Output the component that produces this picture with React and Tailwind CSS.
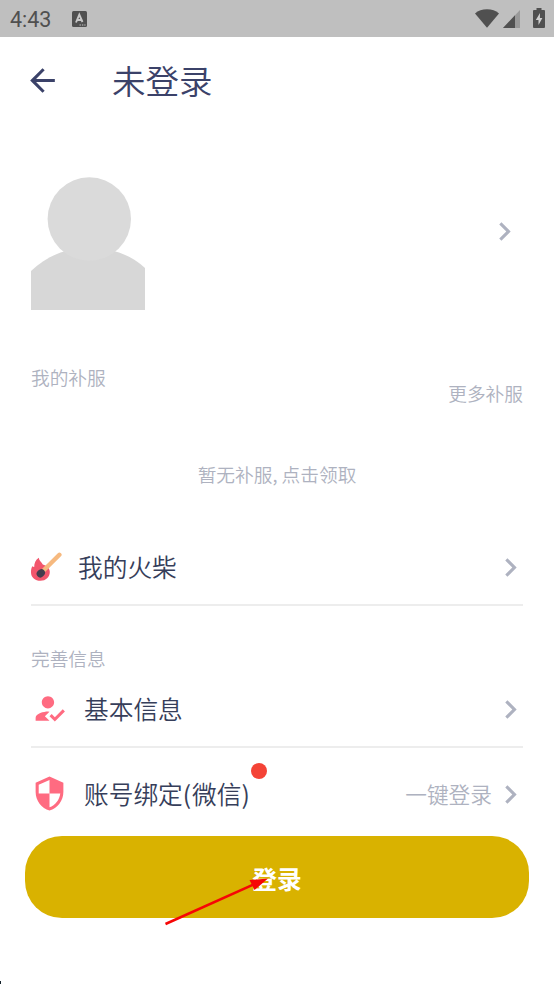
import React from 'react';
import { MdArrowBack, MdChevronRight, MdHowToReg, MdSecurity } from 'react-icons/md';

const StatusBar = () => (
  <div className="h-[37px] bg-[#bfbfbf] flex items-center pl-[10px] pr-[9px] text-[#505050]">
    <span className="font-['Roboto',sans-serif] font-normal text-[21.5px] leading-none w-[62px] mt-[2px]">4:43</span>
    <svg width="15" height="16" viewBox="0 0 15 16">
      <rect width="15" height="16" rx="1.5" fill="currentColor" />
      <path d="M4 11.500 7.300 3.600l3.200 7.400M5.200 9h4.400" fill="none" stroke="#c8c8c8" strokeWidth="1.900" />
      <path d="M7.500 14h6" stroke="#c8c8c8" strokeWidth="1.2" strokeDasharray="1.4 1" />
    </svg>
    <svg className="ml-auto" width="24" height="19" viewBox="0 0 24 19">
      <path d="M0 4.4C3.2 1.800 7.300.3 12 .3s8.800 1.500 12 4.100L12 18.800z" fill="currentColor" />
    </svg>
    <svg className="ml-[4px]" width="17" height="18" viewBox="0 0 17 18">
      <path d="M17 0v18H0z" fill="#999" />
      <path d="M12 5.300V18H0z" fill="currentColor" />
    </svg>
    <svg className="ml-[13px] -mt-[2px]" width="12" height="20" viewBox="0 0 12 20">
      <path d="M3.500 0h5v2H11a1 1 0 0 1 1 1v16a1 1 0 0 1-1 1H1a1 1 0 0 1-1-1V3a1 1 0 0 1 1-1h2.500z" fill="currentColor" />
      <path d="M7 5 2.800 12H5.500v5L9.400 10H6.900z" fill="#d0d0d0" />
    </svg>
  </div>
);

const Avatar = () => (
  <svg width="114" height="133" viewBox="0 0 114 133">
    <path d="M0 94C16 79 34 71 58 71s42 7 56 20v42H0z" fill="#d7d7d7" />
    <circle cx="58.300" cy="42" r="41.700" fill="#dadada" />
  </svg>
);

const MatchIcon = () => (
  <svg width="32" height="30" viewBox="0 0 32 30">
    <path d="M7.800 5.800c.2 3 2.700 4.200 4 6.700 3.500.8 7 3.500 7 7.500 0 5-4 8.800-9.300 8.800S0 25.500 0 20.500c0-2.500.2-4.500 1.300-6.300.5.600 1.200.8 1.900.8C3.200 11 4.500 8 7.800 5.800z" fill="#f2566c" />
    <path d="M13 18 28.400 2.800" stroke="#f6b97f" strokeWidth="4.400" strokeLinecap="round" />
    <ellipse cx="9.800" cy="21.300" rx="4.400" ry="3.800" transform="rotate(-42 9.800 21.300)" fill="#443d4d" />
  </svg>
);

const Chevron = () => <MdChevronRight className="size-[37px] shrink-0 text-[#aeb2c0]" />;

const Row = ({ icon, label, hint, badge, className }) => (
  <div className={`flex items-center ${className}`}>
    {icon}
    <span className="relative -mt-[2px] text-[24.7px] leading-[36px] text-[#363e5a]">
      {label}
      {badge && <span className="absolute -right-[16px] -top-[12px] size-[16px] rounded-full bg-[#f44336]" />}
    </span>
    <span className="ml-auto -mt-[1px] text-[21.700px] leading-[32px] text-[#aeb2c0]">{hint}</span>
    <Chevron />
  </div>
);

const App = () => {
  return (
    <div className="relative h-[984px] w-[554px] overflow-hidden bg-white font-['Noto_Sans_CJK_SC',sans-serif] font-[350]">
      <StatusBar />

      <header className="flex h-[86px] items-center pl-[24px] text-[#3b4269]">
        <MdArrowBack className="size-[37px]" />
        <h1 className="ml-[51px] text-[33.500px] leading-[48px]">未登录</h1>
      </header>

      <main className="pl-[31px] pr-[31px]">
        <div className="mt-[54px] flex h-[133px] justify-between">
          <Avatar />
          <div className="mt-[36px]">
            <Chevron />
          </div>
        </div>

        <div className="mt-[53px] flex h-[44px] justify-between text-[18.700px] leading-[28px] text-[#aeb2c0]">
          <span>我的补服</span>
          <span className="mt-[16px]">更多补服</span>
        </div>
        <p className="mt-[53px] text-center text-[18.700px] leading-[28px] text-[#aeb2c0]">暂无补服, 点击领取</p>

        <Row
          className="mt-[42px] h-[74px] -mr-[6px]"
          icon={<span className="mr-[15px]"><MatchIcon /></span>}
          label="我的火柴"
        />
        <div className="h-[2px] bg-[#ededed]" />

        <h2 className="mt-[38px] text-[18.700px] leading-[28px] text-[#aeb2c0]">完善信息</h2>
        <Row
          className="h-[74px] -mr-[6px]"
          icon={<MdHowToReg className="mr-[16px] -mt-[2px] size-[37px] text-[#ff6b81]" />}
          label="基本信息"
        />
        <div className="h-[2px] bg-[#ededed]" />
        <Row
          className="h-[88px] pt-[4px] -mr-[6px]"
          icon={<MdSecurity className="mr-[16px] -mt-[1px] size-[37px] text-[#ff6b81]" />}
          label={
            <>
              账号绑定<span className="font-normal tracking-[0.9px]">(</span>微信<span className="font-normal tracking-[0.9px]">)</span>
            </>
          }
          hint="一键登录"
          badge
        />
      </main>

      <button className="mx-[25px] block h-[82px] w-[504px] rounded-[37px] bg-[#d9b200] pt-[3px] text-[24.700px] font-bold text-white">
        登录
      </button>

      {/* pointer to the login button */}
      <svg className="absolute left-[160px] top-[870px]" width="120" height="60" viewBox="0 0 120 60">
        <path d="M5.500 54 96 13.500" stroke="#f60606" strokeWidth="2.500" />
        <path d="M108 8.500 89.500 10 94.500 20z" fill="#f60606" />
      </svg>
      <div className="absolute bottom-0 left-0 h-[3px] w-px bg-[#14222b]" />
    </div>
  );
};

export default App;
